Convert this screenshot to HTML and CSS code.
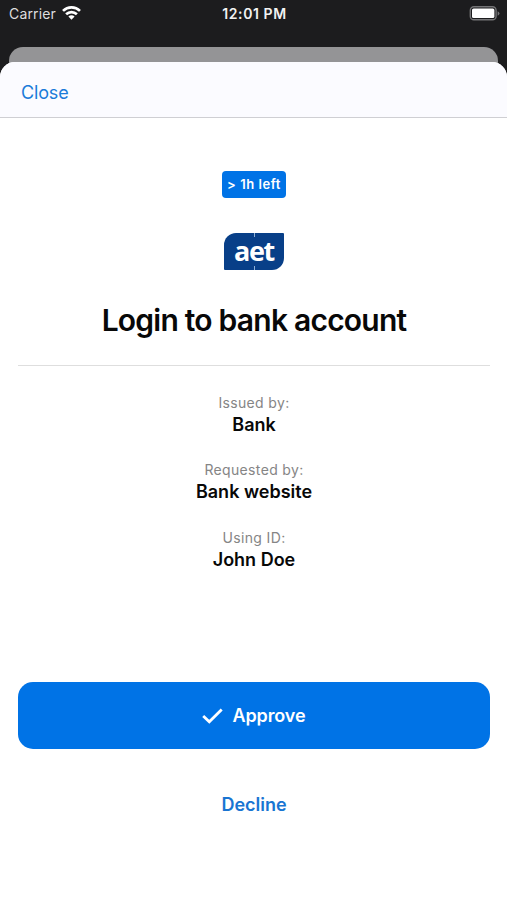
FILE: index.html
```html
<!DOCTYPE html>
<html lang="en">
<head>
<meta charset="utf-8">
<meta name="viewport" content="width=device-width, initial-scale=1">
<title>Login to bank account</title>
<link rel="stylesheet" href="styles.css">
</head>
<body>
<div class="status">
  <div class="carrier"><span>Carrier</span>
    <svg class="wifi" width="19" height="14" viewBox="0 0 19 14" fill="none" stroke="#fff" stroke-width="2.7"><path d="M1 4.9C5.8.3 13.2.3 18 4.9M4.1 8.2C7.2 5.3 11.8 5.3 14.9 8.2"/><path d="M6.4 10.6C8.2 8.9 10.8 8.9 12.6 10.6L9.5 13.7Z" fill="#fff" stroke="none"/></svg>
  </div>
  <div class="time">12:01 PM</div>
  <svg class="battery" width="31" height="15" viewBox="0 0 31 15"><rect x="1.3" y=".8" width="25.8" height="13" rx="3.6" fill="none" stroke="#747476" stroke-width="1.4"/><rect x="3" y="2.5" width="22.4" height="9.6" rx="1.6" fill="#fff"/><path d="M28.6 5.2Q30.5 6 30.5 7.5T28.6 9.8Z" fill="#747476"/></svg>
</div>
<div class="back-card"></div>
<main class="sheet">
  <header class="bar"><a class="close">Close</a></header>
  <section class="content">
    <div class="badge">&gt; 1h left</div>
    <div class="logo">aet</div>
    <h1 class="title">Login to bank account</h1>
    <dl class="details">
      <div class="item"><dt>Issued by:</dt><dd>Bank</dd></div>
      <div class="item"><dt>Requested by:</dt><dd>Bank website</dd></div>
      <div class="item"><dt>Using ID:</dt><dd>John Doe</dd></div>
    </dl>
    <button class="approve"><svg width="21" height="16" viewBox="0 0 21 16" fill="none" stroke="#fff" stroke-width="2.8"><path d="M1.2 8 7.3 13.8 19.7 1.4"/></svg><span>Approve</span></button>
    <button class="decline">Decline</button>
  </section>
</main>
</body>
</html>
```
FILE: styles.css
```css
* { box-sizing: border-box; }
body {
  margin: 0;
  height: 900px;
  overflow: hidden;
  display: flex;
  flex-direction: column;
  background: #1c1c1e;
  color: #080808;
  font-family: Inter, "Liberation Sans", sans-serif;
}
.status {
  height: 47px;
  padding: 0 7px 0 9px;
  display: grid;
  grid-template-columns: 1fr auto 1fr;
  align-items: start;
  color: #f2f2f2;
  font-size: 14px;
  line-height: 28px;
}
.carrier { display: flex; gap: 6px; color: #dededf; letter-spacing: .15px; }
.wifi { margin-top: 6px; }
.time { font-weight: 600; letter-spacing: .6px; }
.battery { justify-self: end; margin-top: 6px; }
.back-card {
  flex: none;
  height: 31px;
  margin: 0 9px -16px;
  border-radius: 14px 14px 0 0;
  background: #949496;
}
.sheet {
  flex: 1;
  position: relative;
  border-radius: 15px 15px 0 0;
  background: #fff;
  overflow: hidden;
}
.bar {
  height: 56px;
  padding: 0 21px;
  border-bottom: 1px solid #cfcfd3;
  background: #fbfbff;
  line-height: 61px;
}
.close { color: #1a7bd9; font-size: 18px; letter-spacing: -.15px; }
.content {
  padding: 53px 17px 0 18px;
  display: flex;
  flex-direction: column;
  align-items: center;
}
.badge {
  width: 64px;
  height: 27px;
  border-radius: 4px;
  background: #0073e6;
  color: #fff;
  text-align: center;
  font-size: 13px;
  font-weight: 600;
  letter-spacing: .55px;
  line-height: 27px;
  white-space: nowrap;
}
.logo {
  width: 60px;
  height: 37px;
  margin-top: 35px;
  border-radius: 12px 1px 12px 1px;
  background:
    linear-gradient(#8fb0d5, #8fb0d5) 30px 0 / 1px 4px no-repeat,
    linear-gradient(#8fb0d5, #8fb0d5) 30px 100% / 1px 4px no-repeat,
    #083f88;
  color: #fff;
  text-align: center;
  font: 700 27px/35px "Open Sans", sans-serif;
  letter-spacing: -1.3px;
}
.title {
  margin: 30px 0 0;
  font-size: 30px;
  font-weight: 600;
  letter-spacing: -.77px;
  line-height: 40px;
  white-space: nowrap;
}
.details {
  align-self: stretch;
  height: 317px;
  margin: 25px 0 0;
  padding-top: 27px;
  border-top: 1px solid #dedede;
  text-align: center;
}
.item { height: 67.3px; }
dt { color: #858585; font-size: 14px; letter-spacing: .35px; line-height: 20px; }
dd { margin: 0; font-size: 18px; font-weight: 600; line-height: 23px; }
button { border: 0; padding: 0; font-family: inherit; font-size: 18px; font-weight: 600; }
.approve {
  align-self: stretch;
  height: 67px;
  border-radius: 15px;
  display: flex;
  align-items: center;
  justify-content: center;
  gap: 9px;
  background: #0073e6;
  color: #fff;
}
.approve span { letter-spacing: -.1px; }
.decline { margin-top: 45px; background: none; color: #1975d2; line-height: 22px; }
```
